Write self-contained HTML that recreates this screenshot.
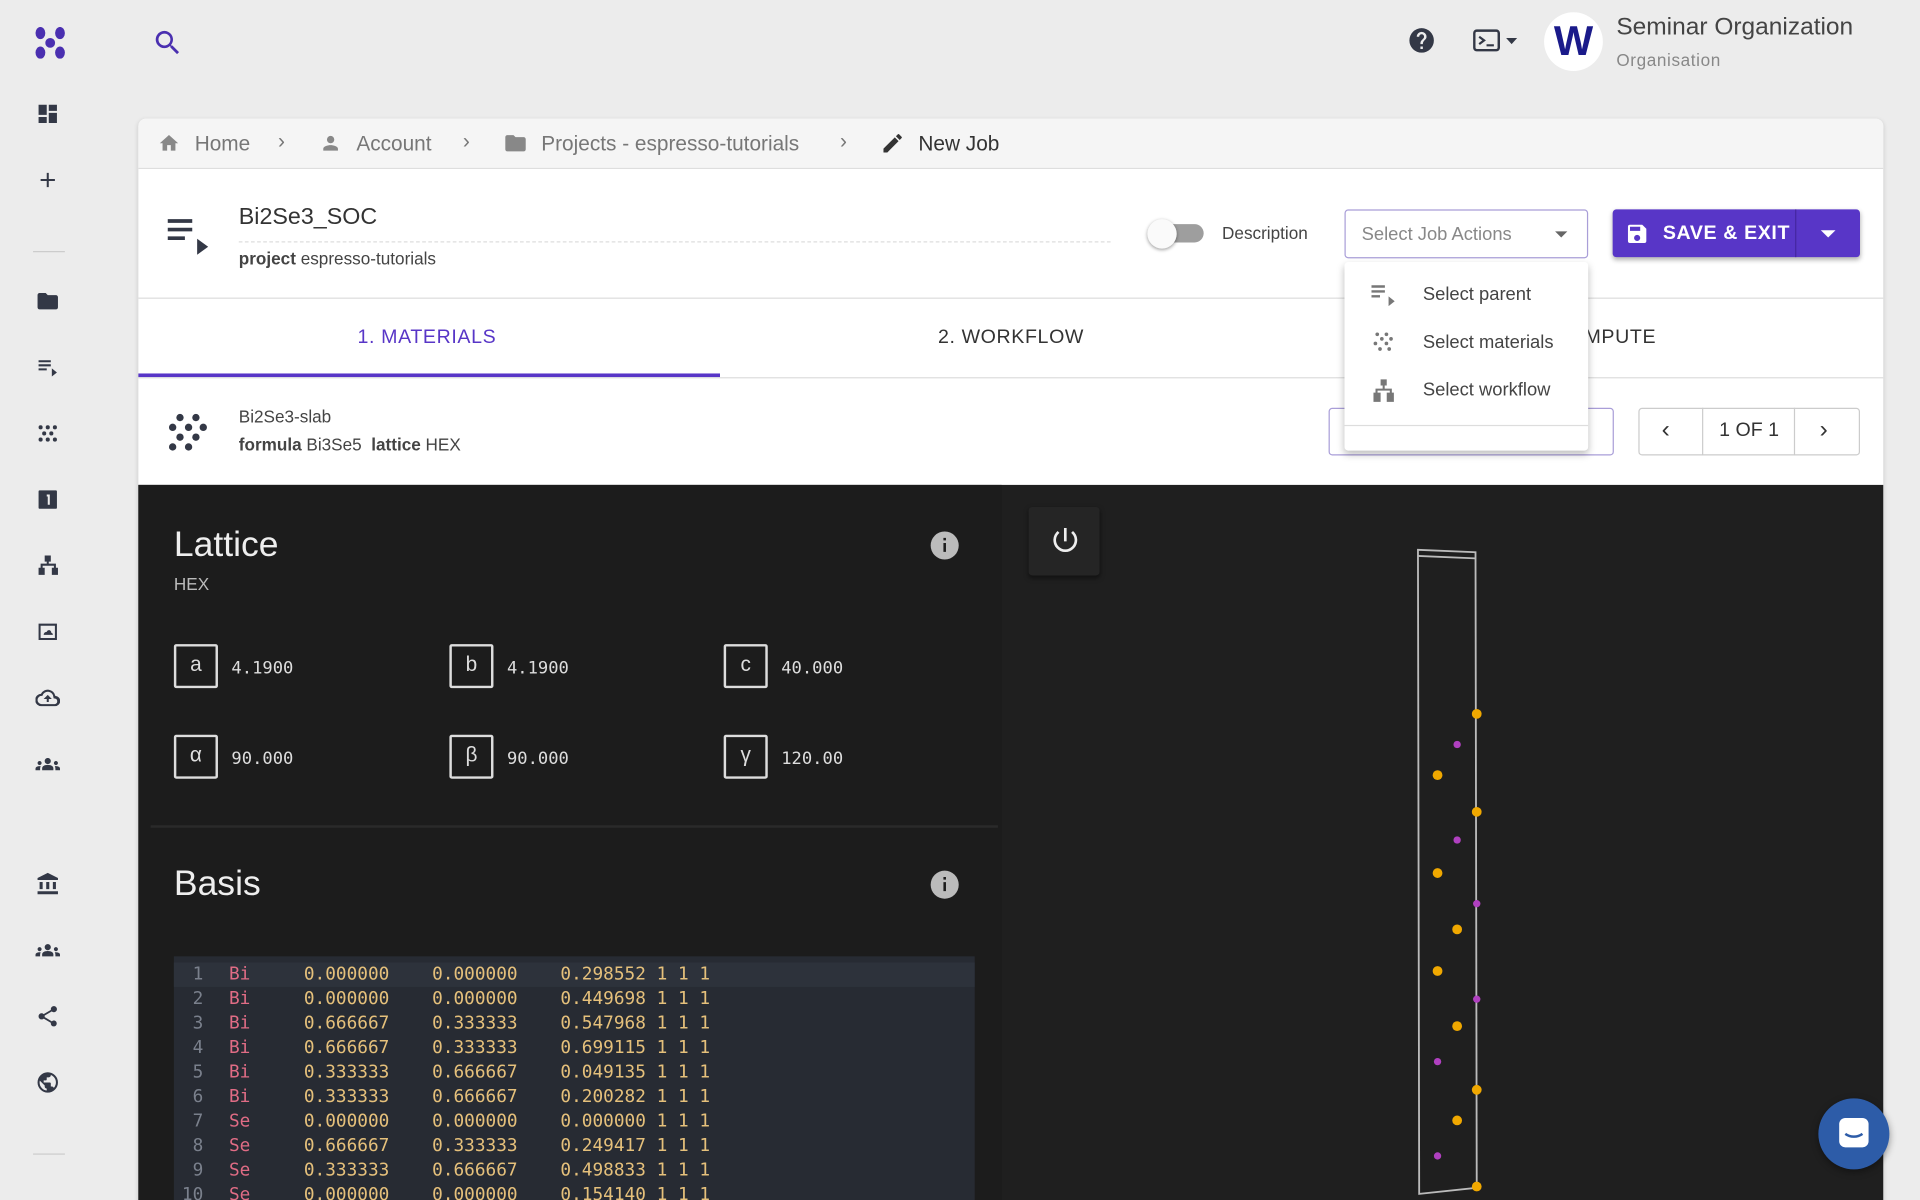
<!DOCTYPE html>
<html><head><meta charset="utf-8"><style>
*{box-sizing:border-box;margin:0;padding:0}
html,body{width:1920px;height:1200px;overflow:hidden;background:#ececec}
#w{width:1568px;height:980px;transform:scale(1.22449);transform-origin:0 0;position:relative;font-family:"Liberation Sans",sans-serif;color:#333}
.a{position:absolute}
.ic{position:absolute;left:29px;width:20px;height:20px;fill:#333846}
.bc{font-size:17px;color:#777}
.mono{font-family:"DejaVu Sans Mono","Liberation Mono",monospace}
.box{position:absolute;width:36px;height:36px;border:2px solid #ddd;color:#ddd;font-size:17px;text-align:center;line-height:30px;border-radius:2px}
.val{position:absolute;color:#ddd;font-size:14px}
.code div{height:20px;line-height:20px;font-size:14.5px;white-space:pre}
.n{color:#7a808c;display:inline-block;width:45px;text-align:right;padding-right:21px}
.el{color:#e06c85}.num{color:#e5c07b}
</style></head><body><div id="w">
<!-- sidebar -->
<svg class="a" style="left:27px;top:22px" width="28" height="26" viewBox="0 0 28 26"><g fill="#4a2fb0"><ellipse cx="6" cy="5" rx="4" ry="5"/><ellipse cx="22" cy="5" rx="4" ry="5"/><circle cx="14" cy="13" r="4"/><ellipse cx="6" cy="21" rx="4" ry="5"/><ellipse cx="22" cy="21" rx="4" ry="5"/></g></svg>
<svg class="ic" style="top:83px" viewBox="0 0 24 24"><path d="M3 13h8V3H3v10zm0 8h8v-6H3v6zm10 0h8V11h-8v10zm0-18v6h8V3h-8z"/></svg>
<svg class="ic" style="top:137px" viewBox="0 0 24 24"><path d="M19 13h-6v6h-2v-6H5v-2h6V5h2v6h6v2z"/></svg>
<div class="a" style="left:27px;top:205px;width:26px;height:1px;background:#ccc"></div>
<svg class="ic" style="top:236px" viewBox="0 0 24 24"><path d="M10 4H4c-1.1 0-2 .9-2 2v12c0 1.1.9 2 2 2h16c1.1 0 2-.9 2-2V8c0-1.1-.9-2-2-2h-8l-2-2z"/></svg>
<svg class="ic" style="top:290px" viewBox="0 0 24 24"><path d="M3 5h12v2H3zm0 4h12v2H3zm0 4h8v2H3zm13 0l5 4-5 4z"/></svg>
<svg class="ic" style="top:344px" viewBox="0 0 24 24"><g><circle cx="5" cy="6" r="2"/><circle cx="12" cy="6" r="2"/><circle cx="19" cy="6" r="2"/><circle cx="8.5" cy="12" r="2"/><circle cx="15.5" cy="12" r="2"/><circle cx="5" cy="18" r="2"/><circle cx="12" cy="18" r="2"/><circle cx="19" cy="18" r="2"/></g></svg>
<svg class="ic" style="top:398px" viewBox="0 0 24 24"><path d="M4 3h16a1 1 0 0 1 1 1v16a1 1 0 0 1-1 1H4a1 1 0 0 1-1-1V4a1 1 0 0 1 1-1zm7 4v2h1v8h2V7z"/></svg>
<svg class="ic" style="top:452px" viewBox="0 0 24 24"><path d="M9 2h6v6h-2v2h7v4h2v7h-6v-7h2v-2H7v2h2v7H3v-7h2v-4h6V8H9z"/></svg>
<svg class="ic" style="top:506px" viewBox="0 0 24 24"><path d="M3 4h18v16H3zm2 2v12h14V6zm3 9c0-2 1.5-3 3-3 .5-1.5 2-2 3-1.5 1 .5 1.5 1.5 1.5 2.5 1 0 1.5 1 1.5 2z"/></svg>
<svg class="ic" style="top:560px" viewBox="0 0 24 24"><path d="M19.4 10A7.5 7.5 0 0 0 5.3 8 6 6 0 0 0 6 20h13a5 5 0 0 0 .4-10zM19 18H6a4 4 0 0 1 0-8h.7A5.5 5.5 0 0 1 17.5 11l.3 1.5h1.200a2.8 2.8 0 0 1 0 5.5zM8 13h3v3h2v-3h3l-4-4z"/></svg>
<svg class="ic" style="top:614px" viewBox="0 0 24 24"><path d="M12 12.8c1.6 0 3 .4 4 .9.9.4 1.5 1.3 1.5 2.3V18h-11v-2c0-1 .6-1.9 1.5-2.3 1-.5 2.4-.9 4-.9zM4 13c1.1 0 2-.9 2-2s-.9-2-2-2-2 .9-2 2 .9 2 2 2zm1 1.1C4.7 14 4.4 14 4 14c-1 0-1.9.2-2.8.6A1.9 1.9 0 0 0 0 16.4V18h4.5v-1.6c0-.8.2-1.6.6-2.3zM20 13c1.1 0 2-.9 2-2s-.9-2-2-2-2 .9-2 2 .9 2 2 2zm4 3.4c0-.8-.5-1.5-1.2-1.8A7 7 0 0 0 20 14c-.4 0-.7 0-1.1.1.4.7.6 1.5.6 2.3V18H24zM12 6c1.7 0 3 1.3 3 3s-1.3 3-3 3-3-1.3-3-3 1.3-3 3-3z"/></svg>
<svg class="ic" style="top:712px" viewBox="0 0 24 24"><path d="M4 10h3v7H4zm6.5 0h3v7h-3zM2 19h20v3H2zm15-9h3v7h-3zm-5-9L2 6v2h20V6z"/></svg>
<svg class="ic" style="top:766px" viewBox="0 0 24 24"><path d="M12 12.8c1.6 0 3 .4 4 .9.9.4 1.5 1.3 1.5 2.3V18h-11v-2c0-1 .6-1.9 1.5-2.3 1-.5 2.4-.9 4-.9zM4 13c1.1 0 2-.9 2-2s-.9-2-2-2-2 .9-2 2 .9 2 2 2zm1 1.1C4.7 14 4.4 14 4 14c-1 0-1.9.2-2.8.6A1.9 1.9 0 0 0 0 16.4V18h4.5v-1.6c0-.8.2-1.6.6-2.3zM20 13c1.1 0 2-.9 2-2s-.9-2-2-2-2 .9-2 2 .9 2 2 2zm4 3.4c0-.8-.5-1.5-1.2-1.8A7 7 0 0 0 20 14c-.4 0-.7 0-1.1.1.4.7.6 1.5.6 2.3V18H24zM12 6c1.7 0 3 1.3 3 3s-1.3 3-3 3-3-1.3-3-3 1.3-3 3-3z"/></svg>
<svg class="ic" style="top:820px" viewBox="0 0 24 24"><path d="M18 16.1c-.8 0-1.4.3-2 .8l-7.1-4.2c.1-.2.1-.5.1-.7s0-.5-.1-.7L16 7.2c.5.5 1.2.8 2 .8 1.7 0 3-1.3 3-3s-1.3-3-3-3-3 1.3-3 3c0 .2 0 .5.1.7L8 9.8C7.5 9.3 6.8 9 6 9c-1.7 0-3 1.3-3 3s1.3 3 3 3c.8 0 1.5-.3 2-.8l7.1 4.2c-.1.2-.1.4-.1.6 0 1.6 1.3 2.9 2.9 2.9s2.9-1.3 2.9-2.9-1.2-2.900-2.8-2.900z"/></svg>
<svg class="ic" style="top:874px" viewBox="0 0 24 24"><path d="M12 2a10 10 0 1 0 0 20 10 10 0 0 0 0-20zm-1 17.9A8 8 0 0 1 4 12c0-.6.1-1.2.2-1.8L9 15v1c0 1.1.9 2 2 2zm6.9-2.5A2 2 0 0 0 16 16h-1v-3c0-.6-.4-1-1-1H8v-2h2c.6 0 1-.4 1-1V7h2c1.1 0 2-.9 2-2v-.4a8 8 0 0 1 2.9 12.8z"/></svg>
<div class="a" style="left:27px;top:942px;width:26px;height:1px;background:#ccc"></div>
<!-- top bar -->
<svg class="a" style="left:124px;top:22px" width="26" height="26" viewBox="0 0 24 24"><path fill="#4a2fb0" d="M15.5 14h-.8l-.3-.3A6.5 6.5 0 1 0 9.5 16a6.5 6.5 0 0 0 4.2-1.6l.3.3v.8l5 5 1.5-1.5zm-6 0a4.5 4.5 0 1 1 0-9 4.5 4.5 0 0 1 0 9z"/></svg>
<svg class="a" style="left:1149px;top:21px" width="24" height="24" viewBox="0 0 24 24"><path fill="#333846" d="M12 2a10 10 0 1 0 0 20 10 10 0 0 0 0-20zm1 17h-2v-2h2zm2.1-7.8l-.9.9C13.5 12.9 13 13.5 13 15h-2v-.5c0-1.1.4-2.1 1.2-2.8l1.2-1.3A2 2 0 1 0 10 9H8a4 4 0 1 1 8 0c0 .9-.4 1.700-.9 2.2z"/></svg>
<svg class="a" style="left:1203px;top:23px" width="38" height="20" viewBox="0 0 38 20"><rect x="1" y="2" width="20" height="16" rx="2" fill="none" stroke="#333846" stroke-width="2"/><path d="M5 7l4 3-4 3M11 14h6" stroke="#333846" stroke-width="1.8" fill="none"/><path d="M27 8h9l-4.5 5z" fill="#333846"/></svg>
<div class="a" style="left:1261px;top:10px;width:48px;height:48px;border-radius:50%;background:#fff;text-align:center;line-height:48px;font-weight:bold;font-size:34px;color:#1a1a8a">W</div>
<div class="a" style="left:1320px;top:11px;font-size:20px;color:#444">Seminar Organization</div>
<div class="a" style="left:1320px;top:41px;font-size:14px;color:#888;letter-spacing:.5px">Organisation</div>
<!-- main card -->
<div class="a" style="left:113px;top:97px;width:1425px;height:890px;background:#fff;border-radius:6px 6px 0 0;box-shadow:0 1px 4px rgba(0,0,0,.15)"></div>
<div class="a" style="left:113px;top:97px;width:1425px;height:41px;background:#f5f5f5;border-bottom:1px solid #ddd;border-radius:6px 6px 0 0"></div>
<svg class="a" style="left:129px;top:108px" width="18" height="18" viewBox="0 0 24 24"><path fill="#888" d="M10 20v-6h4v6h5v-8h3L12 3 2 12h3v8z"/></svg>
<div class="a bc" style="left:159px;top:108px">Home</div>
<div class="a bc" style="left:227px;top:106px">›</div>
<svg class="a" style="left:261px;top:108px" width="18" height="18" viewBox="0 0 24 24"><path fill="#888" d="M12 12a4 4 0 1 0 0-8 4 4 0 0 0 0 8zm0 2c-2.7 0-8 1.3-8 4v2h16v-2c0-2.7-5.3-4-8-4z"/></svg>
<div class="a bc" style="left:291px;top:108px">Account</div>
<div class="a bc" style="left:378px;top:106px">›</div>
<svg class="a" style="left:411px;top:107px" width="20" height="20" viewBox="0 0 24 24"><path fill="#888" d="M10 4H4c-1.1 0-2 .9-2 2v12c0 1.1.9 2 2 2h16c1.1 0 2-.9 2-2V8c0-1.1-.9-2-2-2h-8l-2-2z"/></svg>
<div class="a bc" style="left:442px;top:108px">Projects - espresso-tutorials</div>
<div class="a bc" style="left:686px;top:106px">›</div>
<svg class="a" style="left:719px;top:107px" width="20" height="20" viewBox="0 0 24 24"><path fill="#333" d="M3 17.2V21h3.8L17.8 9.9l-3.7-3.7zM20.7 7a1 1 0 0 0 0-1.4l-2.3-2.3a1 1 0 0 0-1.4 0l-1.8 1.8 3.7 3.7z"/></svg>
<div class="a" style="left:750px;top:108px;font-size:17px;color:#333">New Job</div>
<!-- job header -->
<svg class="a" style="left:136px;top:177px" width="36" height="32" viewBox="0 0 36 32"><path fill="#333846" d="M1 2h20v3H1zm0 7h20v3H1zm0 7h14v3H1zm24 2l9 6.5-9 6.5z"/></svg>
<div class="a" style="left:195px;top:167px;font-size:19px;color:#333">Bi2Se3_SOC</div>
<div class="a" style="left:195px;top:197px;width:712px;border-top:1px dashed #ddd"></div>
<div class="a" style="left:195px;top:203px;font-size:14px;color:#444"><b>project</b> espresso-tutorials</div>
<div class="a" style="left:943px;top:183px;width:40px;height:15px;border-radius:8px;background:#9e9e9e"></div>
<div class="a" style="left:937px;top:179px;width:24px;height:24px;border-radius:50%;background:#fafafa;box-shadow:0 1px 3px rgba(0,0,0,.4)"></div>
<div class="a" style="left:998px;top:182px;font-size:14px;color:#444">Description</div>
<div class="a" style="left:1098px;top:171px;width:199px;height:40px;border:1px solid #a99ed8;border-radius:3px"></div>
<div class="a" style="left:1112px;top:183px;font-size:15px;color:#888">Select Job Actions</div>
<div class="a" style="left:1270px;top:189px;border:5px solid transparent;border-top-color:#666"></div>
<div class="a" style="left:1317px;top:171px;width:202px;height:39px;background:#5836c7;border-radius:3px;box-shadow:0 2px 4px rgba(0,0,0,.3)"></div>
<div class="a" style="left:1466px;top:171px;width:1px;height:39px;background:#4527a0"></div>
<svg class="a" style="left:1327px;top:181px" width="20" height="20" viewBox="0 0 24 24"><path fill="#fff" d="M17 3H5a2 2 0 0 0-2 2v14a2 2 0 0 0 2 2h14a2 2 0 0 0 2-2V7zm-5 16a3 3 0 1 1 0-6 3 3 0 0 1 0 6zm3-10H5V5h10z"/></svg>
<div class="a" style="left:1358px;top:182px;font-size:16px;color:#fff;font-weight:bold;letter-spacing:.5px">SAVE &amp; EXIT</div>
<div class="a" style="left:1487px;top:188px;border:6px solid transparent;border-top-color:#fff"></div>
<div class="a" style="left:113px;top:243px;width:1425px;height:1px;background:#ddd"></div>
<!-- tabs -->
<div class="a" style="left:292px;top:267px;font-size:16px;color:#5836c7;letter-spacing:.5px">1. MATERIALS</div>
<div class="a" style="left:113px;top:305px;width:475px;height:3px;background:#5836c7"></div>
<div class="a" style="left:766px;top:267px;font-size:16px;color:#333;letter-spacing:.5px">2. WORKFLOW</div>
<div class="a" style="left:1294px;top:267px;font-size:16px;color:#333;letter-spacing:.5px">MPUTE</div>
<div class="a" style="left:113px;top:308px;width:1425px;height:1px;background:#ddd"></div>
<!-- material row -->
<svg class="a" style="left:138px;top:337px" width="32" height="32" viewBox="0 0 32 32"><g fill="#333846"><circle cx="9" cy="4" r="3"/><circle cx="22" cy="4" r="3"/><circle cx="3" cy="12" r="3"/><circle cx="16" cy="12" r="3"/><circle cx="28" cy="12" r="3"/><circle cx="9" cy="20" r="3"/><circle cx="22" cy="20" r="3"/><circle cx="3" cy="28" r="3"/><circle cx="16" cy="28" r="3"/></g></svg>
<div class="a" style="left:195px;top:332px;font-size:14px;color:#444">Bi2Se3-slab</div>
<div class="a" style="left:195px;top:355px;font-size:14px;color:#444"><b>formula</b> Bi3Se5 &nbsp;<b>lattice</b> HEX</div>
<div class="a" style="left:1085px;top:333px;width:233px;height:39px;border:1px solid #a99ed8;border-radius:3px"></div>
<div class="a" style="left:1338px;top:333px;width:181px;height:39px;border:1px solid #ccc;border-radius:3px"></div>
<div class="a" style="left:1390px;top:333px;width:1px;height:39px;background:#ccc"></div>
<div class="a" style="left:1465px;top:333px;width:1px;height:39px;background:#ccc"></div>
<div class="a" style="left:1357px;top:340px;font-size:20px;color:#333">‹</div>
<div class="a" style="left:1404px;top:343px;font-size:16px;color:#333">1 OF 1</div>
<div class="a" style="left:1486px;top:340px;font-size:20px;color:#333">›</div>
<!-- dropdown -->
<div class="a" style="left:1098px;top:214px;width:199px;height:154px;background:#fff;border-radius:3px;box-shadow:0 3px 6px rgba(0,0,0,.25)"></div>
<div class="a" style="left:1098px;top:347px;width:199px;height:1px;background:#ddd"></div>
<svg class="a" style="left:1120px;top:232px" width="20" height="18" viewBox="0 0 20 18"><path fill="#777" d="M0 1h11v2H0zm0 4h11v2H0zm0 4h7v2H0zm14 1l5 4-5 4z"/></svg>
<div class="a" style="left:1162px;top:232px;font-size:15px;color:#444">Select parent</div>
<svg class="a" style="left:1121px;top:270px" width="18" height="18" viewBox="0 0 24 24"><g fill="#777"><circle cx="5" cy="4" r="2"/><circle cx="15" cy="4" r="2"/><circle cx="10" cy="9" r="2"/><circle cx="20" cy="9" r="2"/><circle cx="3" cy="14" r="2"/><circle cx="15" cy="14" r="2"/><circle cx="8" cy="20" r="2"/><circle cx="18" cy="20" r="2"/></g></svg>
<div class="a" style="left:1162px;top:271px;font-size:15px;color:#444">Select materials</div>
<svg class="a" style="left:1120px;top:308px" width="20" height="22" viewBox="0 0 24 24"><path fill="#777" d="M9 1h6v6h-2v3h7v4h2v9h-7v-9h3v-2H6v2h3v9H2v-9h2v-4h7V7H9z"/></svg>
<div class="a" style="left:1162px;top:310px;font-size:15px;color:#444">Select workflow</div>
<!-- dark area -->
<div class="a" style="left:113px;top:396px;width:1425px;height:584px;background:#1f1f1f"></div>
<div class="a" style="left:113px;top:396px;width:705px;height:584px;background:#1c1c1c"></div>
<div class="a" style="left:123px;top:674px;width:692px;height:2px;background:#2a2a2a"></div>
<div class="a" style="left:142px;top:429px;font-size:29px;color:#eee">Lattice</div>
<div class="a" style="left:142px;top:469px;font-size:14px;color:#bbb">HEX</div>
<svg class="a" style="left:759px;top:433px" width="25" height="25" viewBox="0 0 24 24"><circle cx="12" cy="12" r="11" fill="#bbb"/><path fill="#1c1c1c" d="M11 10h2v7h-2zm0-4h2v2h-2z"/></svg>
<div class="box" style="left:142px;top:526px">a</div><div class="val mono" style="left:189px;top:538px">4.1900</div>
<div class="box" style="left:367px;top:526px">b</div><div class="val mono" style="left:414px;top:538px">4.1900</div>
<div class="box" style="left:591px;top:526px">c</div><div class="val mono" style="left:638px;top:538px">40.000</div>
<div class="box" style="left:142px;top:600px">α</div><div class="val mono" style="left:189px;top:612px">90.000</div>
<div class="box" style="left:367px;top:600px">β</div><div class="val mono" style="left:414px;top:612px">90.000</div>
<div class="box" style="left:591px;top:600px">γ</div><div class="val mono" style="left:638px;top:612px">120.00</div>
<div class="a" style="left:142px;top:706px;font-size:29px;color:#eee">Basis</div>
<svg class="a" style="left:759px;top:710px" width="25" height="25" viewBox="0 0 24 24"><circle cx="12" cy="12" r="11" fill="#bbb"/><path fill="#1c1c1c" d="M11 10h2v7h-2zm0-4h2v2h-2z"/></svg>
<div class="a code mono" style="left:142px;top:781px;width:654px;height:199px;background:#272b33;padding-top:5px">
<div style="background:#2d323b"><span class="n">1</span><span class="el">Bi</span>     <span class="num">0.000000    0.000000    0.298552 1 1 1</span></div>
<div><span class="n">2</span><span class="el">Bi</span>     <span class="num">0.000000    0.000000    0.449698 1 1 1</span></div>
<div><span class="n">3</span><span class="el">Bi</span>     <span class="num">0.666667    0.333333    0.547968 1 1 1</span></div>
<div><span class="n">4</span><span class="el">Bi</span>     <span class="num">0.666667    0.333333    0.699115 1 1 1</span></div>
<div><span class="n">5</span><span class="el">Bi</span>     <span class="num">0.333333    0.666667    0.049135 1 1 1</span></div>
<div><span class="n">6</span><span class="el">Bi</span>     <span class="num">0.333333    0.666667    0.200282 1 1 1</span></div>
<div><span class="n">7</span><span class="el">Se</span>     <span class="num">0.000000    0.000000    0.000000 1 1 1</span></div>
<div><span class="n">8</span><span class="el">Se</span>     <span class="num">0.666667    0.333333    0.249417 1 1 1</span></div>
<div><span class="n">9</span><span class="el">Se</span>     <span class="num">0.333333    0.666667    0.498833 1 1 1</span></div>
<div><span class="n">10</span><span class="el">Se</span>     <span class="num">0.000000    0.000000    0.154140 1 1 1</span></div>
</div>
<div class="a" style="left:840px;top:414px;width:58px;height:56px;background:#252525;border-radius:3px;box-shadow:0 2px 4px rgba(0,0,0,.5)"></div>
<svg class="a" style="left:857px;top:428px" width="26" height="26" viewBox="0 0 24 24"><path fill="#eee" d="M13 3h-2v10h2zm4.8 2.2l-1.4 1.4A7 7 0 1 1 7.6 6.6L6.2 5.2A9 9 0 1 0 17.8 5.2z"/></svg>
<svg class="a" style="left:1140px;top:440px" width="90" height="540" viewBox="0 0 90 540">
<g fill="none" stroke="#bbb" stroke-width="1.5"><path d="M18 9L65 11L66 530L19 535Z"/><path d="M18 14L65 16"/></g>
<g fill="#f0a800"><circle cx="66" cy="143" r="4"/><circle cx="34" cy="193" r="4"/><circle cx="66" cy="223" r="4"/><circle cx="34" cy="273" r="4"/><circle cx="50" cy="319" r="4"/><circle cx="34" cy="353" r="4"/><circle cx="50" cy="398" r="4"/><circle cx="66" cy="450" r="4"/><circle cx="50" cy="475" r="4"/><circle cx="66" cy="529" r="4"/></g>
<g fill="#b040c0"><circle cx="50" cy="168" r="3"/><circle cx="50" cy="246" r="3"/><circle cx="66" cy="298" r="3"/><circle cx="66" cy="376" r="3"/><circle cx="34" cy="427" r="3"/><circle cx="34" cy="504" r="3"/></g></svg>
<div class="a" style="left:1485px;top:897px;width:58px;height:58px;border-radius:50%;background:#2d5ca8;box-shadow:0 2px 6px rgba(0,0,0,.4)"></div>
<svg class="a" style="left:1500px;top:911px" width="28" height="30" viewBox="0 0 28 30"><rect x="2" y="2" width="24" height="24" rx="5" fill="#fff"/><path d="M7 15c4 3 10 3 14 0" stroke="#2d5ca8" stroke-width="2" fill="none"/></svg>
</div></body></html>
